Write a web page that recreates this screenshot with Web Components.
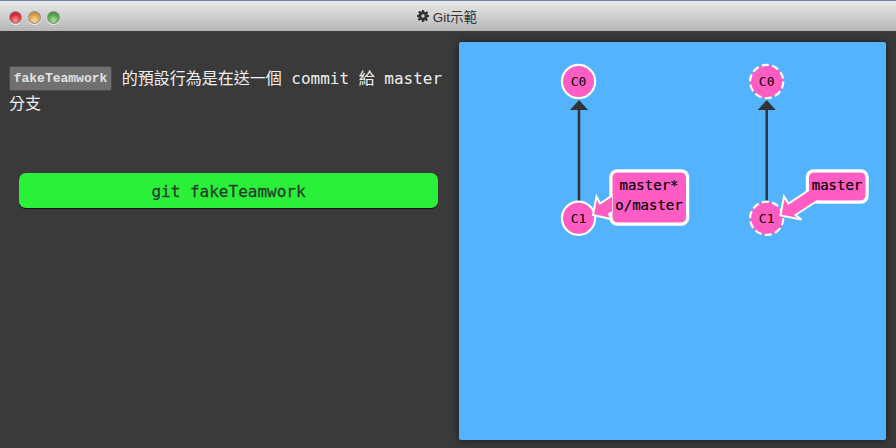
<!DOCTYPE html>
<html><head><meta charset="utf-8"><style>
html,body{margin:0;height:100%;background:#3a3a3a;overflow:hidden}
</style></head><body>
<app-window>
  <span slot="title">Git示範</span>
  <level-text slot="left"></level-text>
  <command-button slot="left">git fakeTeamwork</command-button>
  <git-canvas slot="right"></git-canvas>
</app-window>
<script>
const MONO='"DejaVu Sans Mono","Noto Sans CJK TC",monospace';
class AppWindow extends HTMLElement{constructor(){super();this.attachShadow({mode:'open'}).innerHTML=`<style>
:host{display:flex;flex-direction:column;width:896px;height:448px;background:#3a3a3a}
.bar{box-sizing:border-box;height:31px;flex:none;border-top:1px solid #6a86a5;background:linear-gradient(#e9e9e9,#b6b6b6);display:flex;align-items:center;position:relative;justify-content:center;color:#333;font:13.5px "Liberation Sans","Noto Sans CJK TC",sans-serif}
.lights{position:absolute;left:8.5px;top:9.5px;display:flex;gap:5.5px}
.lights i{width:13.5px;height:13.5px;border-radius:50%;box-sizing:border-box;border:1px solid #8f8f8f;box-shadow:0 1px 1px rgba(255,255,255,.8)}
.r{background:radial-gradient(circle at 50% 75%,#ff9c9c,#e0283a 55%,#b52030)}
.y{background:radial-gradient(circle at 50% 75%,#ffd79a,#dc9f4c 55%,#a97a3a)}
.g{background:radial-gradient(circle at 50% 75%,#a6e694,#58a64d 55%,#3f7d3a)}
.title{display:flex;align-items:center;gap:4px;margin-top:-1px;margin-right:2px}
svg{display:block}
.main{flex:1;display:flex;min-height:0}
.left{box-sizing:border-box;width:459px;flex:none;padding:35px 9px 0 9px;display:flex;flex-direction:column}
.right{flex:1;box-sizing:border-box;padding:11px 10px 8px 0;display:flex}
</style><div class="bar"><div class="lights"><i class="r"></i><i class="y"></i><i class="g"></i></div>
<div class="title"><svg width="12" height="12" viewBox="0 0 24 24"><path fill="#333" fill-rule="evenodd" d="M10 0h4l.6 3.4 2.1.9 2.9-2 2.9 2.9-2 2.9.9 2.100L24 10v4l-3.400.6-.9 2.100 2 2.900-2.900 2.900-2.900-2-2.100.9L14 24h-4l-.6-3.400-2.100-.9-2.900 2-2.900-2.900 2-2.900-.9-2.100L0 14v-4l3.400-.6.9-2.100-2-2.900 2.900-2.900 2.900 2 2.100-.9zM12 8.500a3.500 3.500 0 1 0 0 7 3.500 3.500 0 0 0 0-7z"/></svg><slot name="title"></slot></div></div>
<div class="main"><div class="left"><slot name="left"></slot></div><div class="right"><slot name="right"></slot></div></div>`}}
class LevelText extends HTMLElement{constructor(){super();this.attachShadow({mode:'open'}).innerHTML=`<style>
:host{display:block;color:#f0f0f0;font:16px/25px ${MONO};width:440px}
code{display:inline-block;box-sizing:border-box;height:25px;width:103px;text-align:center;vertical-align:top;background:#707070;border:1px solid #4a4a4a;border-radius:2px;font:bold 13px/23px "Liberation Mono",monospace;color:#e2e2e2}
</style><code>fakeTeamwork</code> 的預設行為是在送一個 commit 給 master 分支`}}
class CommandButton extends HTMLElement{constructor(){super();this.attachShadow({mode:'open'}).innerHTML=`<style>
:host{display:block;box-sizing:border-box;margin:57px 12px 0 10px;height:36px;background:#2bf03a;border-radius:7px;border-bottom:1px solid #111;color:#24402a;font:16px/37px ${MONO};text-align:center;-webkit-text-stroke:.3px #24402a}
</style><slot></slot>`}}
const node=(x,y,t,d)=>`<circle cx="${x}" cy="${y}" r="16.6" fill="#ff5cc4" stroke="#fff" stroke-width="2.2" ${d?'stroke-dasharray="7 3.4"':''}/><text class="n" x="${x}" y="${y+4.5}" text-anchor="middle" font-size="13">${t}</text>`;
const edge=(x)=>`<path d="M${x} 201V106" stroke="#333" stroke-width="2.500" fill="none"/><path d="M${x-9} 110L${x} 100L${x+9} 110z" fill="#333"/>`;
const PINK='#ff5cc4';
class GitCanvas extends HTMLElement{constructor(){super();this.attachShadow({mode:'open'}).innerHTML=`<style>
:host{display:block;flex:1;background:#53b3ff;border-radius:2px;box-shadow:0 0 8px rgba(0,0,0,.55)}
svg{display:block;position:relative}
text{font-family:${MONO};fill:#000;stroke:#000;stroke-width:.2px}
text.n{stroke:none}
</style><svg width="427" height="398" viewBox="459 42 427 398">
${edge(579)}${edge(766.7)}
${node(578.5,81.5,'C0')}${node(578.5,218.3,'C1')}${node(766.7,81.500,'C0',1)}${node(766.7,218.300,'C1',1)}
<rect x="611" y="171" width="76.500" height="53" rx="6" fill="${PINK}" stroke="#fff" stroke-width="3.400"/>
<path d="M593 215L596.500 196.500L600 203.500L613 195V212L609 214L611 219z" fill="${PINK}" stroke="#fff" stroke-width="2"/>
<rect x="612.700" y="172.700" width="73.100" height="49.600" rx="5" fill="${PINK}"/>
<text x="649" y="190" text-anchor="middle" font-size="14">master*</text>
<text x="649" y="210" text-anchor="middle" font-size="14">o/master</text>
<rect x="807.500" y="171" width="59.500" height="31" rx="6" fill="${PINK}" stroke="#fff" stroke-width="3.400"/>
<path d="M780.500 215.500L784 196.500L788.500 203.500L812 188L820 199L795.500 215L801.500 219.500z" fill="${PINK}" stroke="#fff" stroke-width="2"/>
<rect x="809.200" y="172.700" width="56.100" height="27.600" rx="5" fill="${PINK}"/>
<text x="837" y="190" text-anchor="middle" font-size="14">master</text>
</svg>`}}
customElements.define('app-window',AppWindow);
customElements.define('level-text',LevelText);
customElements.define('command-button',CommandButton);
customElements.define('git-canvas',GitCanvas);
</script></body></html>
